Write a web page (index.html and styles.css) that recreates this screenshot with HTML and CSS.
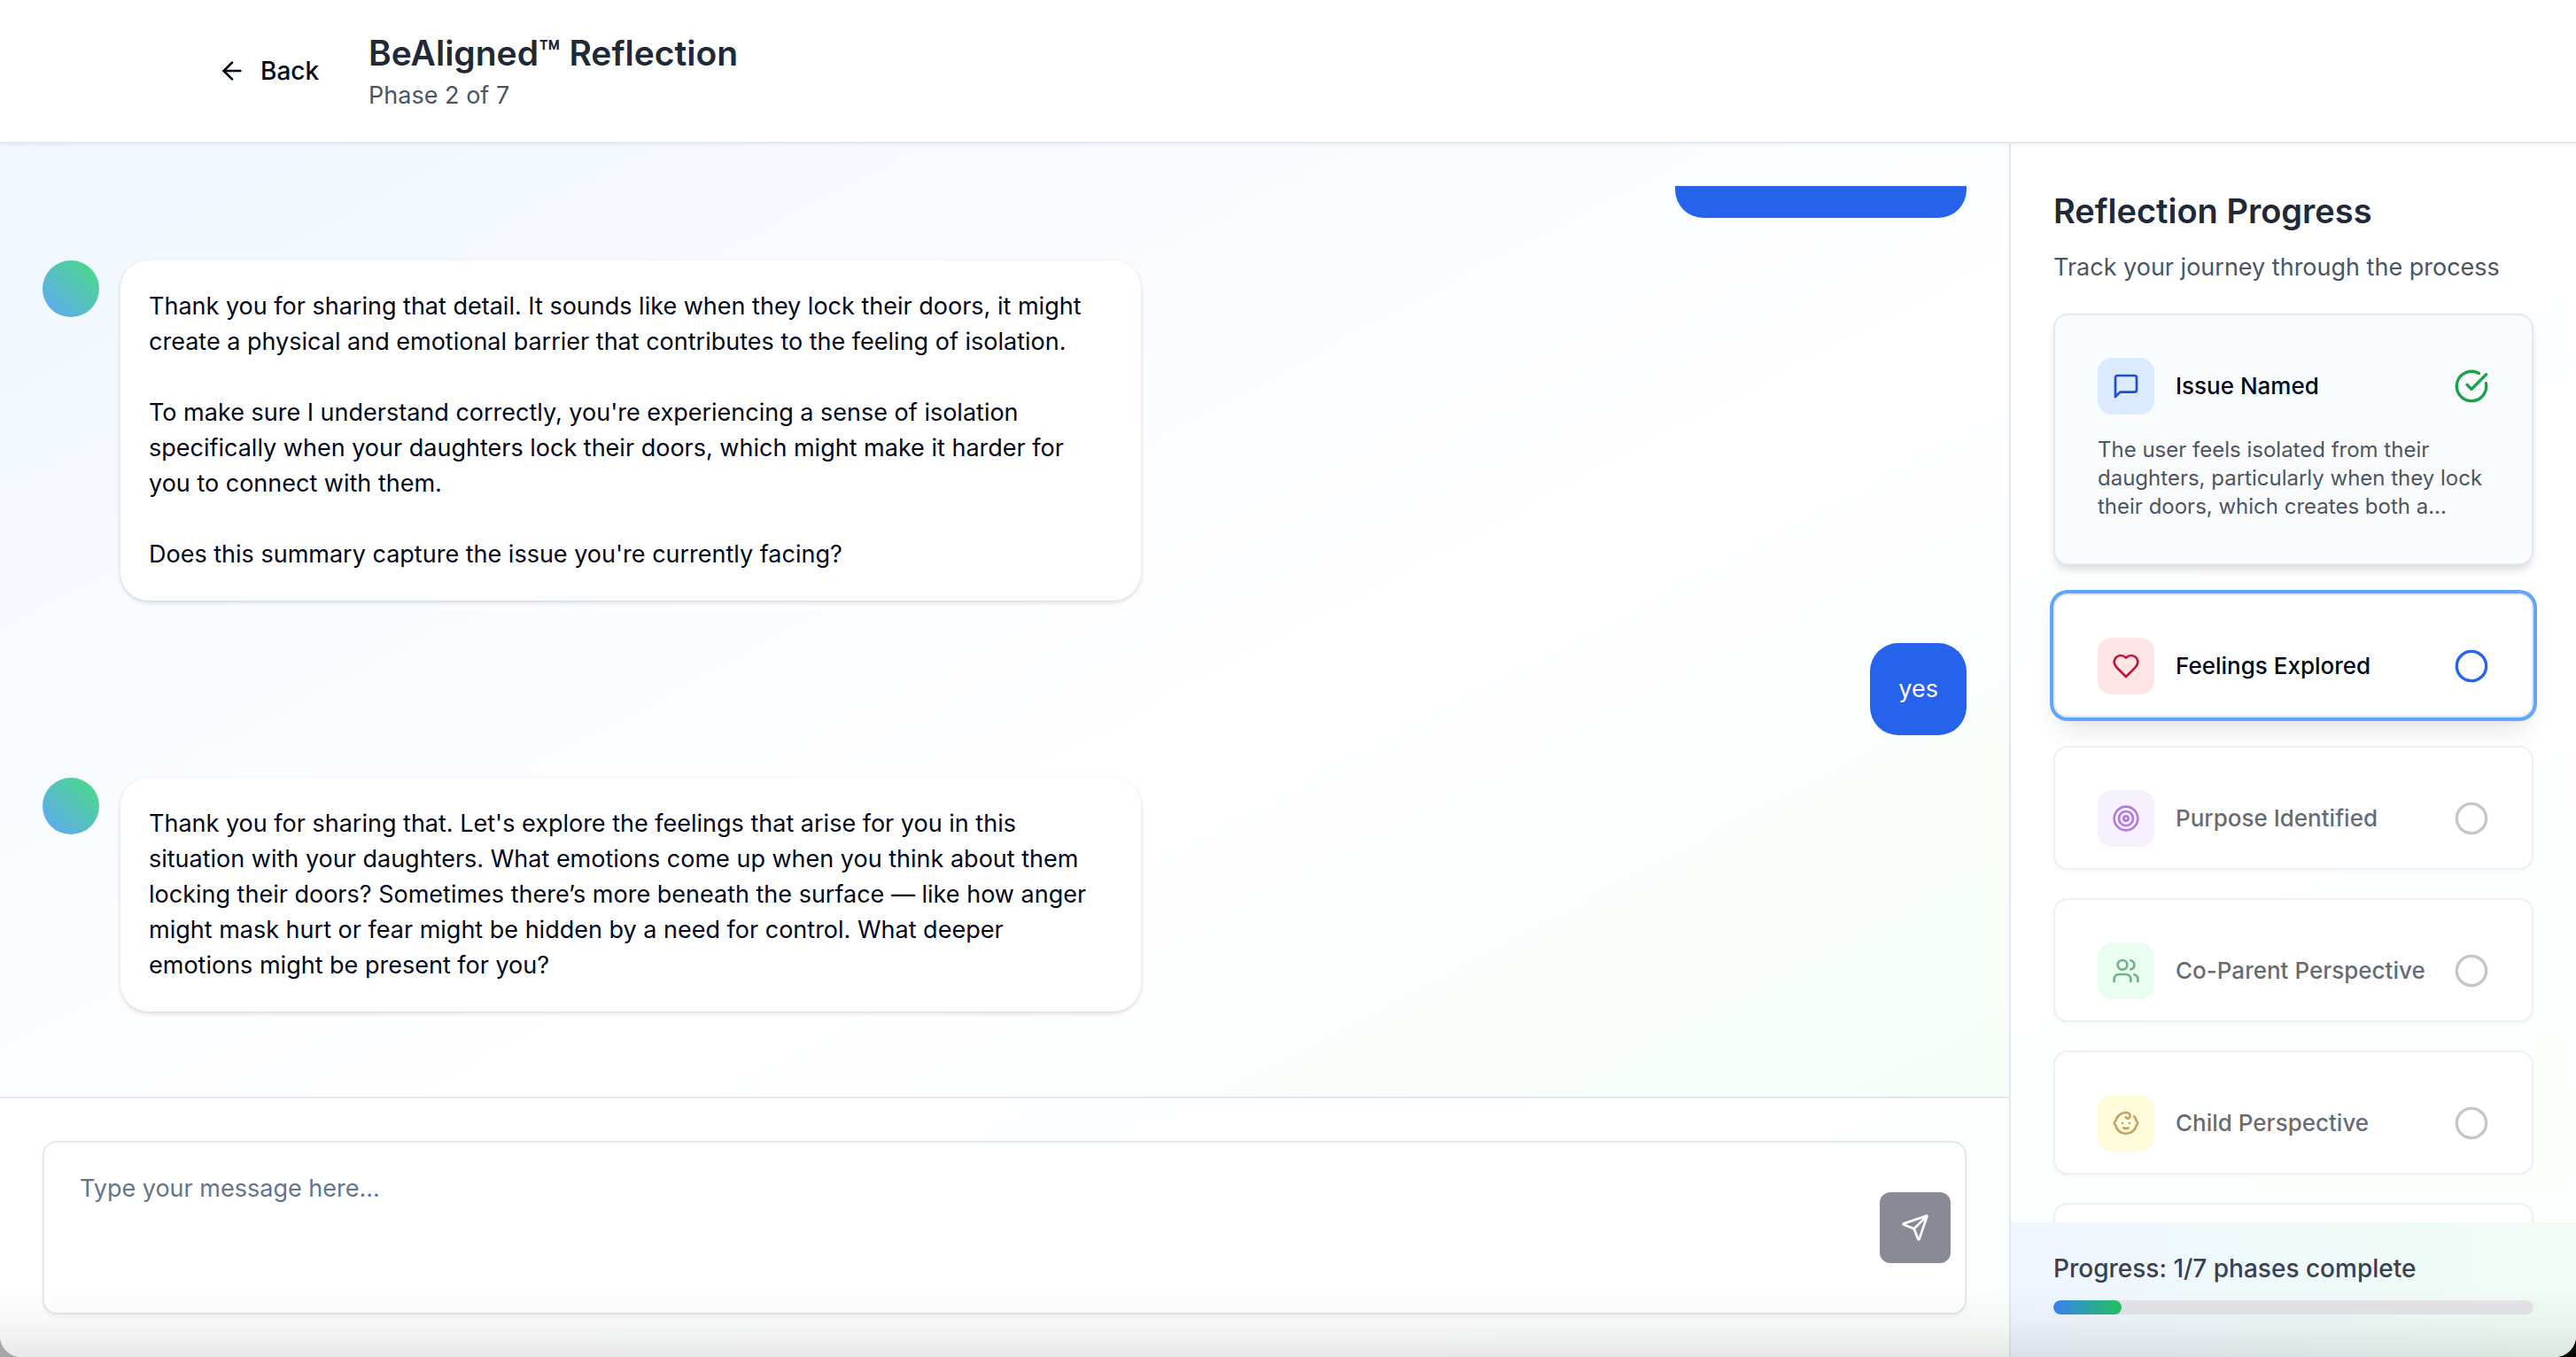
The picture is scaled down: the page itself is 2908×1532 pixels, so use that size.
FILE: index.html
```html
<!DOCTYPE html>
<html lang="en">
<head>
<meta charset="utf-8">
<title>BeAligned™ Reflection</title>
<link rel="stylesheet" href="styles.css">
</head>
<body>
<div class="app">
  <header class="topbar">
    <div class="topbar-inner">
      <button class="back" type="button">
        <svg class="icon" viewBox="0 0 24 24" aria-hidden="true"><path d="m12 19-7-7 7-7"/><path d="M19 12H5"/></svg>
        Back
      </button>
      <div>
        <h1 class="heading">BeAligned™ Reflection</h1>
        <p class="sub">Phase 2 of 7</p>
      </div>
    </div>
  </header>

  <div class="workspace">
    <main class="chat">
      <div class="messages">
        <div class="thread">
          <div class="row row-user"><div class="bubble bubble-user bubble-long"></div></div>
          <div class="row">
            <div class="avatar"></div>
            <div class="bubble bubble-guide">
              <p>Thank you for sharing that detail. It sounds like when they lock their doors, it might create a physical and emotional barrier that contributes to the feeling of isolation.</p>
              <p>To make sure I understand correctly, you're experiencing a sense of isolation specifically when your daughters lock their doors, which might make it harder for you to connect with them.</p>
              <p>Does this summary capture the issue you're currently facing?</p>
            </div>
          </div>
          <div class="row row-user"><div class="bubble bubble-user">yes</div></div>
          <div class="row">
            <div class="avatar"></div>
            <div class="bubble bubble-guide">
              <p>Thank you for sharing that. Let's explore the feelings that arise for you in this situation with your daughters. What emotions come up when you think about them locking their doors? Sometimes there’s more beneath the surface — like how anger might mask hurt or fear might be hidden by a need for control. What deeper emotions might be present for you?</p>
            </div>
          </div>
        </div>
      </div>
      <form class="composer">
        <div class="field">
          <textarea class="input" placeholder="Type your message here..." aria-label="Message"></textarea>
          <button class="send" type="button" aria-label="Send" disabled>
            <svg class="icon" viewBox="0 0 24 24" aria-hidden="true"><path d="M14.536 21.686a.5.5 0 0 0 .937-.024l6.5-19a.496.496 0 0 0-.635-.635l-19 6.5a.5.5 0 0 0-.024.937l7.93 3.18a2 2 0 0 1 1.112 1.11z"/><path d="m21.854 2.147-10.94 10.939"/></svg>
          </button>
        </div>
      </form>
    </main>

    <aside class="sidebar">
      <div class="phases">
        <h2 class="heading heading-phases">Reflection Progress</h2>
        <p class="sub sub-phases">Track your journey through the process</p>
        <ol class="cards">
          <li class="card card-done">
            <div class="card-head">
              <span class="badge badge-blue"><svg class="icon" viewBox="0 0 24 24" aria-hidden="true"><path d="M21 15a2 2 0 0 1-2 2H7l-4 4V5a2 2 0 0 1 2-2h14a2 2 0 0 1 2 2z"/></svg></span>
              <h3 class="card-title">Issue Named</h3>
              <svg class="status status-done" viewBox="0 0 24 24" aria-hidden="true"><path d="M21.801 10A10 10 0 1 1 17 3.335"/><path d="m9 11 3 3L22 4"/></svg>
            </div>
            <p class="card-text">The user feels isolated from their daughters, particularly when they lock their doors, which creates both a...</p>
          </li>
          <li class="card card-active">
            <div class="card-head">
              <span class="badge badge-rose"><svg class="icon" viewBox="0 0 24 24" aria-hidden="true"><path d="M19 14c1.49-1.46 3-3.21 3-5.5A5.5 5.5 0 0 0 16.5 3c-1.76 0-3 .5-4.5 2-1.5-1.5-2.74-2-4.5-2A5.5 5.5 0 0 0 2 8.5c0 2.3 1.5 4.05 3 5.5l7 7Z"/></svg></span>
              <h3 class="card-title">Feelings Explored</h3>
              <svg class="status status-active" viewBox="0 0 24 24" aria-hidden="true"><circle cx="12" cy="12" r="10"/></svg>
            </div>
          </li>
          <li class="card card-pending">
            <div class="card-head">
              <span class="badge badge-purple"><svg class="icon" viewBox="0 0 24 24" aria-hidden="true"><circle cx="12" cy="12" r="10"/><circle cx="12" cy="12" r="6"/><circle cx="12" cy="12" r="2"/></svg></span>
              <h3 class="card-title">Purpose Identified</h3>
              <svg class="status" viewBox="0 0 24 24" aria-hidden="true"><circle cx="12" cy="12" r="10"/></svg>
            </div>
          </li>
          <li class="card card-pending">
            <div class="card-head">
              <span class="badge badge-green"><svg class="icon" viewBox="0 0 24 24" aria-hidden="true"><path d="M16 21v-2a4 4 0 0 0-4-4H6a4 4 0 0 0-4 4v2"/><circle cx="9" cy="7" r="4"/><path d="M22 21v-2a4 4 0 0 0-3-3.87"/><path d="M16 3.13a4 4 0 0 1 0 7.75"/></svg></span>
              <h3 class="card-title">Co-Parent Perspective</h3>
              <svg class="status" viewBox="0 0 24 24" aria-hidden="true"><circle cx="12" cy="12" r="10"/></svg>
            </div>
          </li>
          <li class="card card-pending">
            <div class="card-head">
              <span class="badge badge-yellow"><svg class="icon" viewBox="0 0 24 24" aria-hidden="true"><path d="M9 12h.01"/><path d="M15 12h.01"/><path d="M10 16c.5.3 1.2.5 2 .5s1.5-.2 2-.5"/><path d="M19 6.3a9 9 0 0 1 1.8 3.9 2 2 0 0 1 0 3.6 9 9 0 0 1-17.6 0 2 2 0 0 1 0-3.6A9 9 0 0 1 12 3c2 0 3.5 1.1 3.5 2.5s-.9 2.5-2 2.5c-.8 0-1.5-.4-1.5-1"/></svg></span>
              <h3 class="card-title">Child Perspective</h3>
              <svg class="status" viewBox="0 0 24 24" aria-hidden="true"><circle cx="12" cy="12" r="10"/></svg>
            </div>
          </li>
          <li class="card card-pending"><div class="card-head"></div></li>
        </ol>
      </div>
      <div class="summary">
        <label class="summary-label" for="progress">Progress: 1/7 phases complete</label>
        <progress class="bar" id="progress" value="1" max="7"></progress>
      </div>
    </aside>
  </div>
  <div class="bottom-shade"></div>
</div>
</body>
</html>
```
FILE: styles.css
```css
* { box-sizing: border-box; margin: 0; padding: 0; }

body {
  background: linear-gradient(to right, #a6a6a6 50%, #000 50%);
  color: #020817;
  font-family: Inter, "Liberation Sans", sans-serif;
  font-size: 27px;
  line-height: 40px;
}

button, textarea { font: inherit; color: inherit; }

.app {
  position: relative;
  display: flex;
  flex-direction: column;
  height: 100vh;
  overflow: hidden;
  border-radius: 0 0 24px 24px;
  background: linear-gradient(to bottom right, #eff6ff, #fff 50%, #f0fdf4) #fff;
}

.icon, .status {
  flex: none;
  width: 32px;
  height: 32px;
  fill: none;
  stroke: currentColor;
  stroke-width: 2;
  stroke-linecap: round;
  stroke-linejoin: round;
}

/* Header */
.topbar {
  position: relative;
  z-index: 1;
  border-bottom: 2px solid #e2e8f0;
  background: rgba(255, 255, 255, 0.95);
  box-shadow: 0 2px 4px rgba(0, 0, 0, 0.05);
}
.topbar-inner {
  display: flex;
  align-items: center;
  gap: 32px;
  max-width: 2560px;
  height: 160px;
  margin: 0 auto;
  padding: 0 48px;
}
.back {
  display: flex;
  align-items: center;
  gap: 16px;
  height: 72px;
  padding: 0 24px;
  border: 0;
  background: none;
  font-size: 28px;
  font-weight: 500;
}
.heading {
  color: #1f2937;
  font-size: 39px;
  font-weight: 600;
  line-height: 56px;
}
.heading-phases { font-size: 38px; }
.sub { color: #4b5563; }

/* Chat */
.workspace { display: flex; flex: 1; min-height: 0; }
.chat { display: flex; flex: 1; flex-direction: column; min-width: 0; }
.messages { display: flex; flex: 1; min-height: 0; padding: 48px; }
.thread {
  display: flex;
  flex: 1;
  flex-direction: column;
  justify-content: flex-end;
  gap: 48px;
  padding-bottom: 48px;
  overflow: hidden;
}
.row { display: flex; flex: none; gap: 24px; }
.row-user { justify-content: flex-end; }
.avatar {
  flex: none;
  width: 64px;
  height: 64px;
  border-radius: 50%;
  background: linear-gradient(to top right, #60a5fa, #4ade80);
}
.bubble { max-width: 1152px; padding: 32px; border-radius: 32px; }
.bubble-guide {
  padding-right: 40px;
  background: #fff;
  box-shadow: 0 2px 6px rgba(0, 0, 0, 0.08), 0 2px 4px rgba(0, 0, 0, 0.08);
}
.bubble-guide p + p { margin-top: 40px; }
.bubble-user { background: #2563eb; color: #fff; }
.bubble-long { width: 329px; height: 104px; }

/* Composer */
.composer { padding: 48px; border-top: 2px solid #e2e8f0; background: rgba(255, 255, 255, 0.8); }
.field { position: relative; display: flex; }
.input {
  flex: 1;
  height: 196px;
  padding: 32px 120px 32px 40px;
  border: 2px solid #e2e8f0;
  border-radius: 16px;
  background: #fff;
  box-shadow: 0 2px 4px rgba(0, 0, 0, 0.05);
  resize: none;
}
.input::placeholder { color: #64748b; }
.send {
  position: absolute;
  right: 18px;
  top: 58px;
  display: flex;
  align-items: center;
  justify-content: center;
  width: 80px;
  height: 80px;
  border: 0;
  border-radius: 12px;
  background: #888b95;
  color: #fff;
}

/* Sidebar */
.sidebar {
  display: flex;
  flex: none;
  flex-direction: column;
  width: 640px;
  border-left: 2px solid #e2e8f0;
  background: rgba(255, 255, 255, 0.8);
}
.phases { flex: 1; min-height: 0; padding: 48px; overflow: hidden; }
.sub-phases { margin: 16px 0 32px; }
.cards { display: flex; flex-direction: column; gap: 32px; list-style: none; }
.card { padding: 48px 48px 24px; border: 2px solid #e2e8f0; border-radius: 16px; background: #fff; }
.card-done {
  padding-bottom: 48px;
  background: #fafbfd;
  box-shadow: 0 8px 12px -2px rgba(0, 0, 0, 0.1), 0 4px 8px -4px rgba(0, 0, 0, 0.1);
}
.card-active {
  box-shadow: 0 0 0 4px #60a5fa, 0 20px 30px -6px rgba(0, 0, 0, 0.1), 0 8px 12px -8px rgba(0, 0, 0, 0.1);
}
.card-pending { opacity: 0.6; box-shadow: 0 2px 4px rgba(0, 0, 0, 0.05); }
.card-head { display: flex; align-items: center; gap: 24px; min-height: 64px; }
.card-title { flex: 1; font-size: 26px; font-weight: 500; line-height: 40px; white-space: nowrap; }
.card-text { margin-top: 24px; color: #4b5563; font-size: 24px; line-height: 32px; }
.badge {
  display: flex;
  flex: none;
  align-items: center;
  justify-content: center;
  width: 64px;
  height: 64px;
  border-radius: 16px;
}
.badge-blue { background: #dbeafe; color: #1d4ed8; }
.badge-rose { background: #ffe4e6; color: #be123c; }
.badge-purple { background: #f3e8ff; color: #7e22ce; }
.badge-green { background: #dcfce7; color: #15803d; }
.badge-yellow { background: #fef9c3; color: #a16207; }
.status { width: 40px; height: 40px; color: #9ca3af; }
.status-done { color: #16a34a; }
.status-active { color: #2563eb; }

.summary {
  display: flex;
  flex-direction: column;
  gap: 16px;
  padding: 32px 48px 48px;
  background: linear-gradient(to right, #eff6ff, #f0fdf4);
}
.summary-label { color: #374151; font-size: 28px; font-weight: 500; }
.bar {
  appearance: none;
  width: 100%;
  height: 16px;
  border: 0;
  border-radius: 8px;
  overflow: hidden;
}
.bar::-webkit-progress-bar { border-radius: 8px; background: #e4e4e9; }
.bar::-webkit-progress-value { border-radius: 8px; background: linear-gradient(to right, #3b82f6, #22c55e); }

.bottom-shade {
  position: absolute;
  inset: auto 0 0;
  height: 80px;
  background: linear-gradient(to bottom, transparent, rgba(0, 0, 0, 0.03) 50%, rgba(0, 0, 0, 0.09));
  pointer-events: none;
}
```
